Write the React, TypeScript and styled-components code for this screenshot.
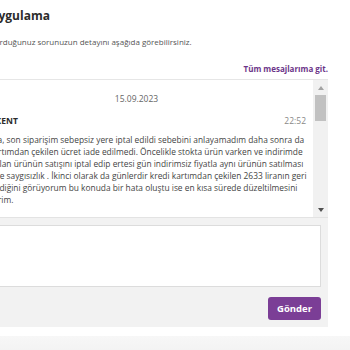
import React from 'react';
import styled, { createGlobalStyle } from 'styled-components';

const GlobalStyle = createGlobalStyle`
  body {
    margin: 0;
    background: #ffffff;
    font-family: "Open Sans", "DejaVu Sans", sans-serif;
    overflow: hidden;
  }
`;

const Page = styled.div`
  width: 350px;
  height: 350px;
  overflow: hidden;
  display: flex;
  flex-direction: column;
`;

const Content = styled.div`
  margin-left: -40px;
  width: 368px;
  padding-top: 7px;
`;

const Title = styled.h1`
  margin: 0;
  font-size: 12px;
  line-height: 18px;
  font-weight: 700;
  color: #2b2b2b;
`;

const Subtitle = styled.p`
  margin: 11px 0 0;
  font-size: 8px;
  line-height: 12px;
  color: #555555;
`;

const LinkRow = styled.div`
  display: flex;
  justify-content: flex-end;
  margin-top: 15px;
`;

const AllLink = styled.a`
  font-size: 8px;
  line-height: 12px;
  font-weight: 700;
  color: #6c3589;
  text-decoration: none;
`;

const Panel = styled.div`
  margin-top: 4px;
  background: #f2f2f2;
  border-top: 1px solid #e6e6e6;
  padding-bottom: 7px;
`;

const MessageBox = styled.div`
  display: flex;
  height: 137px;
  background: #ffffff;
  border-bottom: 1px solid #e3e3e3;
`;

const Messages = styled.div`
  flex: 1;
  overflow: hidden;
  padding: 0 7px;
`;

const ScrollTrack = styled.div`
  width: 15px;
  flex-shrink: 0;
  background: #f1f1f1;
  display: flex;
  flex-direction: column;
  align-items: center;
`;

const Arrow = styled.div<{ $down?: boolean }>`
  height: 15px;
  width: 15px;
  display: flex;
  align-items: center;
  justify-content: center;

  &::after {
    content: '';
    width: 0;
    height: 0;
    border-left: 3.5px solid transparent;
    border-right: 3.5px solid transparent;
    ${(p) =>
      p.$down
        ? 'border-top: 4px solid #505050;'
        : 'border-bottom: 4px solid #a3a3a3;'}
  }
`;

const Thumb = styled.div`
  width: 11px;
  height: 26px;
  background: #c1c1c1;
`;

const TrackSpace = styled.div`
  flex: 1;
`;

const DateLabel = styled.div`
  text-align: center;
  font-size: 8.5px;
  line-height: 12px;
  color: #666666;
  padding: 13px 0 10px;
`;

const MessageHead = styled.div`
  display: flex;
  justify-content: space-between;
  font-size: 8.5px;
  line-height: 12px;
`;

const Sender = styled.span`
  font-weight: 700;
  color: #2b2b2b;
`;

const Time = styled.span`
  color: #888888;
`;

const Body = styled.p`
  margin: 7px 0 10px;
  font-size: 8.4px;
  line-height: 12px;
  color: #444444;
  white-space: nowrap;
`;

const Composer = styled.div`
  padding: 7px 7px 0 0;
  display: flex;
  flex-direction: column;
  gap: 10px;
`;

const TextArea = styled.textarea`
  display: block;
  box-sizing: border-box;
  width: 100%;
  height: 62px;
  border: 1px solid #dcdcdc;
  background: #ffffff;
  resize: none;
  font-family: inherit;
  font-size: 8px;
  outline: none;
`;

const Actions = styled.div`
  display: flex;
  justify-content: flex-end;
`;

const SendButton = styled.button`
  width: 53px;
  height: 23px;
  padding: 0;
  border: none;
  border-radius: 3px;
  background: #7b3e96;
  color: #ffffff;
  font-family: inherit;
  font-size: 9.5px;
  font-weight: 700;
  cursor: pointer;
`;

const Footer = styled.div`
  margin-top: 9px;
  height: 20px;
  background: linear-gradient(#f7f7f7, #f3f3f3);
`;

const lines = [
  'Merhaba, son siparişim sebepsiz yere iptal edildi sebebini anlayamadım daha sonra da',
  'kredi kartımdan çekilen ücret iade edilmedi. Öncelikle stokta ürün varken ve indirimde',
  'satışta olan ürünün satışını iptal edip ertesi gün indirimsiz fiyatla aynı ürünün satılması',
  'tüketiciye saygısızlık . İkinci olarak da günlerdir kredi kartımdan çekilen 2633 liranın geri',
  'ödenmediğini görüyorum bu konuda bir hata oluştu ise en kısa sürede düzeltilmesini',
  'rica ederim.',
];

const App = () => {
  return (
    <Page>
      <GlobalStyle />
      <Content>
        <Title>Web Uygulama</Title>
        <Subtitle>Son oluşturduğunuz sorunuzun detayını aşağıda görebilirsiniz.</Subtitle>
        <LinkRow>
          <AllLink href="#">Tüm mesajlarıma git.</AllLink>
        </LinkRow>
        <Panel>
          <MessageBox>
            <Messages>
              <DateLabel>15.09.2023</DateLabel>
              <MessageHead>
                <Sender>ALPER KENT</Sender>
                <Time>22:52</Time>
              </MessageHead>
              <Body>
                {lines.map((l, i) => (
                  <React.Fragment key={i}>
                    {l}
                    {i < lines.length - 1 && <br />}
                  </React.Fragment>
                ))}
              </Body>
              <DateLabel>16.09.2023</DateLabel>
              <MessageHead>
                <Sender>MÜŞTERİ HİZMETLERİ</Sender>
                <Time>10:14</Time>
              </MessageHead>
            </Messages>
            <ScrollTrack>
              <Arrow />
              <Thumb />
              <TrackSpace />
              <Arrow $down />
            </ScrollTrack>
          </MessageBox>
          <Composer>
            <TextArea />
            <Actions>
              <SendButton>Gönder</SendButton>
            </Actions>
          </Composer>
        </Panel>
      </Content>
      <Footer />
    </Page>
  );
};

export default App;
